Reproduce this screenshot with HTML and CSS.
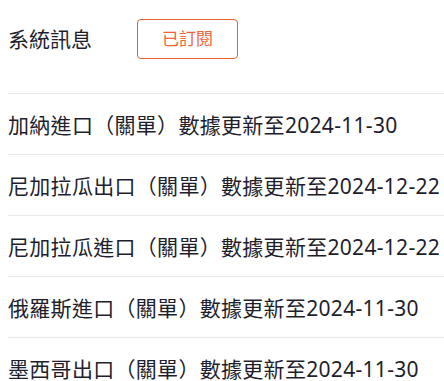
FILE: index.html
```html
<!DOCTYPE html>
<html lang="zh-Hant">

<head>
    <meta charset="UTF-8">
    <meta name="viewport" content="width=device-width, initial-scale=1.0">
    <title>系統訊息</title>

    <link rel="stylesheet" href="styles.css">
</head>

<body>
    <div class="main">

        <div class="header">
            <span class="title">系統訊息</span>
            <div class="btn">已訂閱</div>
        </div>

        <div class="list">
            <div class="item">加納進口（關單）數據更新至2024-11-30</div>
            <div class="item">尼加拉瓜出口（關單）數據更新至2024-12-22</div>
            <div class="item">尼加拉瓜進口（關單）數據更新至2024-12-22</div>
            <div class="item">俄羅斯進口（關單）數據更新至2024-11-30</div>
            <div class="item">墨西哥出口（關單）數據更新至2024-11-30</div>
        </div>

        <!-- 浮水印 -->
        <div class="mark mark-1">TOPEASE</div>
        <div class="mark mark-2">TOPEASE</div>
    </div>
</body>

</html>
```

FILE: styles.css
```css
* {
    box-sizing: border-box;
}

body {
    margin: 0;
    background-color: #fff;
    font-family: "Noto Sans", "Noto Sans CJK TC", sans-serif;
    color: #1e1e2d;
}

.main {
    position: relative;
    height: 381px;
    padding-left: 8px;
    overflow: hidden;
}

.header {
    display: flex;
    align-items: flex-start;
    padding-top: 19px;
    height: 93px;
}

.title {
    font-size: 21px;
    line-height: 40px;
    width: 129px;
}

.btn {
    width: 101px;
    height: 40px;
    border: 1px solid #e8612c;
    border-radius: 4px;
    color: #f0653a;
    font-size: 17px;
    line-height: 38px;
    text-align: center;
}

.item {
    height: 61px;
    border-top: 1px solid #e8e8ec;
    display: flex;
    align-items: center;
    font-size: 21px;
    letter-spacing: 0.3px;
    white-space: nowrap;
}

.mark {
    position: absolute;
    font-family: "Liberation Serif", serif;
    font-weight: bold;
    font-size: 26px;
    color: rgba(0, 0, 0, 0.02);
    transform: rotate(-25deg);
    pointer-events: none;
}

.mark-1 {
    left: 200px;
    top: 25px;
}

.mark-2 {
    left: 190px;
    top: 300px;
}
```
